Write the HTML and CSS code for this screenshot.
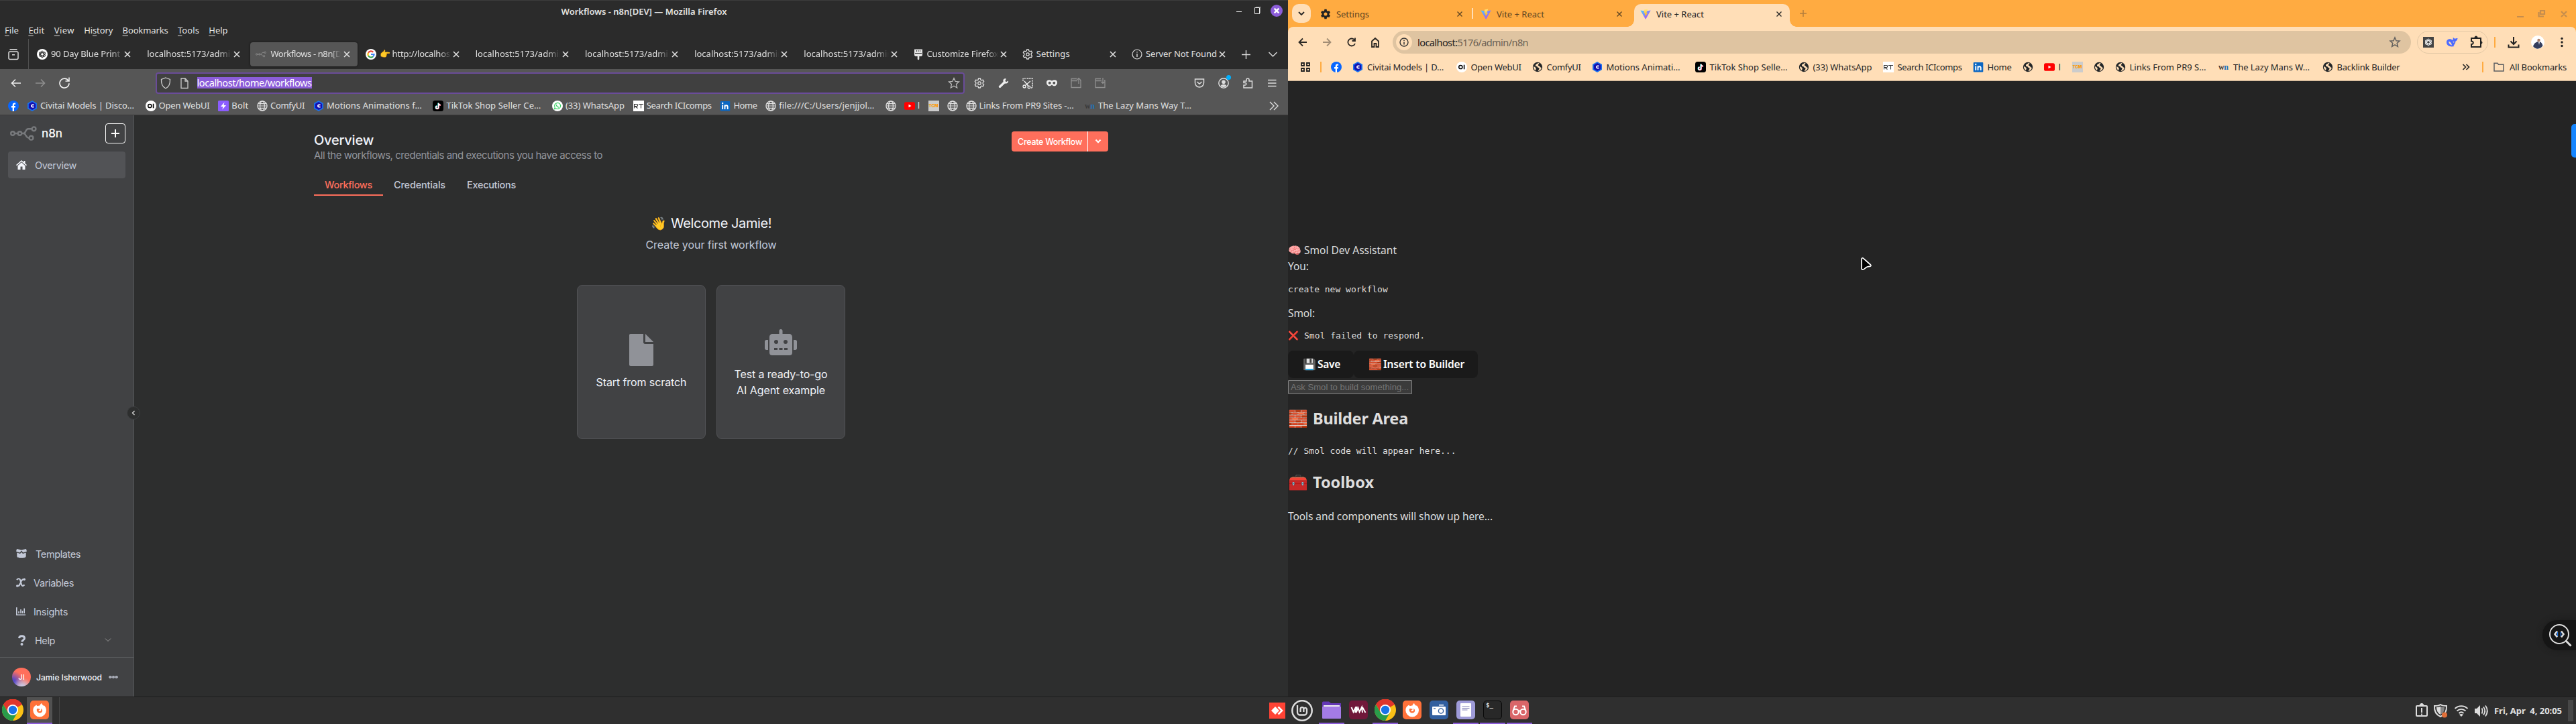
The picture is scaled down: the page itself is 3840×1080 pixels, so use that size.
FILE: index.html
```html
<!DOCTYPE html>
<html lang="en">
<head>
<meta charset="utf-8">
<title>Desktop</title>
<link rel="stylesheet" href="styles.css">
</head>
<body>
<svg class="defs" aria-hidden="true">
  <defs>
    <linearGradient id="vb" x1="0" y1="0" x2="1" y2="1"><stop offset="0" stop-color="#41d1ff"/><stop offset="1" stop-color="#bd34fe"/></linearGradient>
    <linearGradient id="vy" x1="0" y1="0" x2="0" y2="1"><stop offset="0" stop-color="#ffea83"/><stop offset="1" stop-color="#ffa800"/></linearGradient>
  </defs>
  <symbol id="x" viewBox="0 0 16 16"><path d="M4 4l8 8M12 4l-8 8" fill="none" stroke="currentColor" stroke-width="1.6"/></symbol>
  <symbol id="globe" viewBox="0 0 16 16"><g fill="none" stroke="currentColor" stroke-width="1.2"><circle cx="8" cy="8" r="7.1"/><ellipse cx="8" cy="8" rx="3.4" ry="7.1"/><path d="M1 8h14M2 4.6h12M2 11.4h12"/></g></symbol>
  <symbol id="earth" viewBox="0 0 16 16"><circle cx="8" cy="8" r="7.2" fill="#222527"/><path d="M9 1.800C7 4 5.500 3 5 5.500s2.500 1 3 2.500 2.500.5 2.500 2.200S9 12.500 8.500 14.200c3-.4 5-2.700 5.300-5.200-1.300-.2-2.300-1.500-3.300-2.500S8.500 6 9 4.500s1.500-1 1.500-2zM2 7c1.500.6 3.500 1.500 3.700 3s-.7 1.500-.7 3.200C3 12 1.700 9.500 2 7z" fill="#ffdeb7"/></symbol>
  <symbol id="fb" viewBox="0 0 16 16"><circle cx="8" cy="8" r="8" fill="#0866ff"/><path d="M6.700 16v-5.500H5V8h1.700V6.700c0-2.200 1-3.300 3-3.300.5 0 1 .1 1.400.2v2.100h-.9c-1 0-1.200.4-1.200 1.200V8h2l-.4 2.500H9V16z" fill="#fff"/></symbol>
  <symbol id="civ" viewBox="0 0 16 16"><path d="M8 0l7 4v8l-7 4-7-4V4z" fill="#1971ee"/><path d="M8 2l5.200 3v6L8 14l-5.200-3V5z" fill="#1410b0"/><path d="M10.600 6.400H8.200L7 7.200v1.700l1.200.8h2.400" fill="none" stroke="#fff" stroke-width="1.700"/></symbol>
  <symbol id="oi" viewBox="0 0 16 16"><circle cx="8" cy="8" r="8" fill="#fff"/><circle cx="6.300" cy="8" r="2.600" fill="none" stroke="#000" stroke-width="1.500"/><path d="M11.600 4.700v6.600" stroke="#000" stroke-width="1.600"/></symbol>
  <symbol id="bolt" viewBox="0 0 16 16"><rect width="16" height="16" rx="1.500" fill="#8b5cff"/><path d="M9.500 2.500L4 9h3.400l-1 4.500L12 7H8.500z" fill="#fff"/></symbol>
  <symbol id="tik" viewBox="0 0 16 16"><rect width="16" height="16" rx="3.500" fill="#000"/><g fill="none" stroke-width="1.700"><path d="M8.200 3.500v6.600a1.900 1.900 0 1 1-2-1.900M8.200 4c.3 1.700 1.600 2.500 3 2.500" stroke="#25f4ee"/><path d="M9.200 4v6.600a1.900 1.900 0 1 1-2-1.900M9.200 4.500c.3 1.700 1.600 2.500 3 2.500" stroke="#fe2c55"/><path d="M8.700 3.700v6.600a1.900 1.900 0 1 1-2-1.900M8.700 4.200c.3 1.700 1.600 2.500 3 2.500" stroke="#fff"/></g></symbol>
  <symbol id="wa" viewBox="0 0 16 16"><circle cx="8" cy="8" r="8" fill="#fff"/><path d="M3.500 12.600l.7-2.400a4.500 4.500 0 1 1 1.700 1.700z" fill="none" stroke="#3bd366" stroke-width="1.200"/><path d="M6.400 6c0 2 1.700 3.900 3.700 4" fill="none" stroke="#3bd366" stroke-width="1.500"/></symbol>
  <symbol id="rt" viewBox="0 0 16 16"><rect width="16" height="16" fill="#fff"/><path d="M1.500 11.500v-6h4c1.500 0 1.500 3 0 3h-3l4 3M8 5.500h7M11.500 5.500v6" fill="none" stroke="#333" stroke-width="1.100"/></symbol>
  <symbol id="in" viewBox="0 0 16 16"><rect x=".7" y="1" width="14.600" height="14.500" rx="1" fill="#0a66c2"/><path d="M4.200 6.500V13M7.500 13V6.500M7.500 9.500c0-3 4.200-3 4.200 0V13" fill="none" stroke="#fff" stroke-width="1.900"/><circle cx="4.200" cy="4" r="1.200" fill="#fff"/></symbol>
  <symbol id="yt" viewBox="0 0 16 16"><rect y="2.200" width="16" height="11.600" rx="2.600" fill="#f00"/><path d="M6.500 5.700v4.600L10.500 8z" fill="#fff"/></symbol>
  <symbol id="gear" viewBox="0 0 16 16"><path d="M6.600 1h2.800l.5 2 1.400.8 2-.6 1.400 2.400L13.200 7v2l1.500 1.400-1.400 2.400-2-.6-1.400.8-.5 2H6.600l-.5-2-1.400-.8-2 .6-1.400-2.400L2.800 9V7L1.300 5.600l1.400-2.400 2 .6L6.100 3z" fill="none" stroke="currentColor" stroke-width="1.300" stroke-linejoin="round"/><circle cx="8" cy="8" r="2.200" fill="none" stroke="currentColor" stroke-width="1.300"/></symbol>
  <symbol id="gearf" viewBox="0 0 16 16"><path fill-rule="evenodd" d="M6.400.8h3.200l.4 2.100 1.400.8 2-.7L15 5.800l-1.600 1.400v1.600L15 10.200 13.400 13l-2-.7-1.400.8-.4 2.100H6.400L6 13.100l-1.400-.8-2 .7L1 10.200l1.600-1.400V7.200L1 5.800 2.600 3l2 .7L6 2.900zM8 5.500a2.500 2.500 0 1 0 0 5 2.500 2.500 0 0 0 0-5z" fill="currentColor"/></symbol>
  <symbol id="vite" viewBox="0 0 16 16"><path d="M15.600 2.400L8.500 15.200a.5.5 0 0 1-.8 0L.4 2.400l7.700 1.300z" fill="url(#vb)"/><path d="M11.200.4L6 1.400l-.4 5.700 1.700-.4-.5 2.600 1.200-.3-.7 3.600L11.300 6l-2 .4z" fill="url(#vy)"/></symbol>
  <symbol id="gpt" viewBox="0 0 16 16"><g fill="none" stroke="currentColor" stroke-width="1.100"><ellipse cx="8" cy="8" rx="2.600" ry="5.600"/><ellipse cx="8" cy="8" rx="2.600" ry="5.600" transform="rotate(60 8 8)"/><ellipse cx="8" cy="8" rx="2.600" ry="5.600" transform="rotate(120 8 8)"/></g></symbol>
  <symbol id="google" viewBox="0 0 16 16"><circle cx="8" cy="8" r="8" fill="#fff"/><g fill="none" stroke-width="2.200"><path d="M4 5.700A4.600 4.600 0 0 1 11.300 4.800" stroke="#ea4335"/><path d="M4 5.700a4.600 4.600 0 0 0 0 4.600" stroke="#fbbc05"/><path d="M4 10.300a4.600 4.600 0 0 0 7 1.100" stroke="#34a853"/><path d="M8 8h4.600a4.600 4.600 0 0 1-1.600 3.400" stroke="#4285f4"/></g></symbol>
  <symbol id="nodes" viewBox="0 0 40 22"><g fill="none" stroke="currentColor" stroke-width="2.400"><circle cx="4" cy="11" r="2.800"/><circle cx="14.500" cy="11" r="2.800"/><circle cx="35.500" cy="4.300" r="2.900"/><circle cx="31.500" cy="17.700" r="2.900"/><path d="M7 11h4.500M17.500 11H20c4 0 2.500-6.700 7-6.700h5.500M20 11c4 0 3 6.700 8.300 6.700"/></g></symbol>
  <symbol id="chrome" viewBox="0 0 32 32"><circle cx="16" cy="16" r="16" fill="#fbc116"/><path d="M16 16L2.100 8A16 16 0 0 1 29.900 8z" fill="#e0362c"/><path d="M16 8h13.900A16 16 0 0 0 2.100 8L9 20z" fill="#e0362c"/><path d="M2.100 8A16 16 0 0 0 16 32l7-12-7-4-7 4z" fill="#2a9c4a"/><circle cx="16" cy="16" r="8" fill="#fff"/><circle cx="16" cy="16" r="6.200" fill="#1a73e8"/></symbol>
  <symbol id="ff" viewBox="0 0 28 28"><rect width="28" height="28" rx="5" fill="#ff7139"/><path d="M9.500 6.500c.2 1 .8 1.500 1.700 1.600 1.200-.6 2.600-.7 3.300-.5.2-1.600 1.300-3 2.600-3.600.1 2 2 2.700 3 4 .7-.2.500-1 .5-1 2.200 2.200 3.400 4.700 3.400 7.600a9.800 9.800 0 0 1-19.700 0c0-3.400 1.600-6.700 5.200-8.100z" fill="#fff"/><path d="M10 12.500c1.300-.9 2.600-.5 3.400 0 1.800-.2 1.700.8.300 1.300-1 .4-.6 1.500-1.500 1.600 2.300 1.600 5.300-.1 3.800-3.500 3 .7 3.200 6-1.500 6.600-3 .3-5.600-2.800-4.500-6z" fill="#ff7139"/></symbol>
</svg>

<main class="desk">
  <section class="ffx ub">
    <header class="titlebar"><span class="wtitle" data-w="247">Workflows - n8n[DEV] — Mozilla Firefox</span>
      <div class="wbtns"><svg width="76" height="22" viewBox="0 0 76 22"><path d="M8 12.500h8" stroke="#eee"/><path d="M35.500 6.500h7v9h-7z" fill="none" stroke="#eee"/><path d="M37 5.500h7.500v9" fill="none" stroke="#888"/><circle cx="68" cy="11" r="9" fill="#8c5dd9"/><path d="M64.700 7.700l6.600 6.600M71.300 7.700l-6.600 6.600" stroke="#fff" stroke-width="2.500"/></svg></div>
    </header>
    <nav class="menubar"><span data-w="21"><u>F</u>ile</span><span data-w="24"><u>E</u>dit</span><span data-w="30"><u>V</u>iew</span><span data-w="43">Hi<u>s</u>tory</span><span data-w="68"><u>B</u>ookmarks</span><span data-w="32"><u>T</u>ools</span><span data-w="28"><u>H</u>elp</span></nav>
    <div class="tabs">
      <div class="view"><svg width="18" height="18" viewBox="0 0 18 18"><g fill="none" stroke="#ddd" stroke-width="1.500"><rect x="2" y="5" width="14" height="11.500" rx="2"/><path d="M3.500 1.700h11M7 9.700h4"/></g></svg></div>
      <div class="tab"><span class="disc"><svg class="i14"><use href="#gpt"/></svg></span><span class="t"><b data-w="103">90 Day Blue Print</b></span><svg class="i16"><use href="#x"/></svg></div>
      <div class="tab"><span class="t"><b data-w="132">localhost:5173/admin</b></span><svg class="i16"><use href="#x"/></svg></div>
      <div class="tab on"><svg class="i16 dim"><use href="#nodes"/></svg><span class="t"><b data-w="120">Workflows - n8n[DEV</b></span><svg class="i16"><use href="#x"/></svg></div>
      <div class="tab"><svg class="i16"><use href="#google"/></svg><span class="t"><b data-w="110">👉 http://localhost</b></span><svg class="i16"><use href="#x"/></svg></div>
      <div class="tab"><span class="t"><b data-w="132">localhost:5173/admin</b></span><svg class="i16"><use href="#x"/></svg></div>
      <div class="tab"><span class="t"><b data-w="132">localhost:5173/admin</b></span><svg class="i16"><use href="#x"/></svg></div>
      <div class="tab"><span class="t"><b data-w="132">localhost:5173/admin</b></span><svg class="i16"><use href="#x"/></svg></div>
      <div class="tab"><span class="t"><b data-w="132">localhost:5173/admin</b></span><svg class="i16"><use href="#x"/></svg></div>
      <div class="tab"><svg class="i16" viewBox="0 0 16 16"><path d="M2 .5h12v9l-1.500 1.500H9.300V15a1.300 1.300 0 0 1-2.600 0v-4H3.500L2 9.500z" fill="#e4e4e4"/><path d="M5.500 2v2M8 2v2M10.500 2v2M3 6.500h10" stroke="#333"/></svg><span class="t"><b data-w="107">Customize Firefox</b></span><svg class="i16"><use href="#x"/></svg></div>
      <div class="tab"><svg class="i16"><use href="#gear"/></svg><span class="t"><b data-w="50">Settings</b></span><svg class="i16"><use href="#x"/></svg></div>
      <div class="tab"><svg class="i16" viewBox="0 0 16 16"><circle cx="8" cy="8" r="7" fill="none" stroke="#ddd" stroke-width="1.200"/><path d="M8 7v5M8 4v1.500" stroke="#ddd" stroke-width="1.400"/></svg><span class="t"><b data-w="106">Server Not Found</b></span><svg class="i16"><use href="#x"/></svg></div>
      <svg class="tabend" width="70" height="20" viewBox="0 0 70 20"><path d="M17.500 4v13M11 10.500h13M51.500 7l6 6 6-6" fill="none" stroke="#ddd" stroke-width="1.400"/></svg>
    </div>
    <div class="navbar">
      <svg class="navl" width="120" height="24" viewBox="0 0 120 24"><g fill="none" stroke="#eee" stroke-width="1.600"><path d="M31 12H17.500M23 6.500L17.500 12l5.500 5.500"/><path d="M53 12h13.500M61 6.500l5.500 5.500-5.500 5.500" stroke="#8e8e8e"/><path d="M102 8.500a7 7 0 1 0 1 3.700M97.500 9H103V3.500"/></g></svg>
      <div class="url">
        <svg width="46" height="20" viewBox="0 0 46 20"><g fill="none" stroke="#ccc" stroke-width="1.300"><path d="M9 2l6.500 2.500c.3 6-1.500 11-6.500 13.500C4 15.500 2.200 10.500 2.500 4.500z"/><path d="M32 3h6l4 4v10.500H32zM38 3v4h4"/></g></svg>
        <mark data-w="171">localhost/home/workflows</mark>
        <svg class="star" width="18" height="18" viewBox="0 0 18 18"><path d="M9 1.500l2.200 5 5.300.5-4 3.600 1.200 5.400L9 13.200 4.300 16l1.200-5.400-4-3.600 5.300-.5z" fill="none" stroke="#bbb" stroke-width="1.300"/></svg>
      </div>
      <div class="tools"><svg class="i16"><use href="#gear"/></svg>
        <svg class="i16" viewBox="0 0 16 16"><path d="M15 4.500l-3 1.800-1.700-1.600L12 1.500C8.500.5 6.700 3 7.600 6L1 12.500c-1 1.500 1 3.300 2.500 2.300L10 8.500c3.300.7 5.500-1.500 5-4z" fill="#eee"/></svg>
        <svg class="i16" viewBox="0 0 16 16"><path d="M1 5V1h14v14h-3" fill="none" stroke="#eee" stroke-width="1.500" stroke-dasharray="1.500 1"/><g fill="none" stroke="#eee" stroke-width="1.400"><circle cx="3" cy="13" r="2"/><circle cx="10" cy="14" r="1.800"/><path d="M4.500 11.500L12 5M9 12.500L3 5"/></g></svg>
        <svg class="i16" viewBox="0 0 16 16"><path fill-rule="evenodd" d="M0 7c0-4 4-4.500 8-2.500 4-2 8-1.500 8 2.500 0 5-5 7-8 3.500C5 14 0 12 0 7zm4.700-1.200a2 2 0 1 0 .01 4 2 2 0 0 0 0-4zm6.600 0a2 2 0 1 0 .01 4 2 2 0 0 0 0-4z" fill="#eee"/></svg>
        <svg class="i16 mute" viewBox="0 0 16 16"><path d="M9 1.500H1v13h14V4h-1M1 4.500h9M12 9V.8M9.500 3L12 .7 14.500 3" fill="none" stroke="currentColor" stroke-width="1.300"/></svg>
        <svg class="i16 mute" viewBox="0 0 16 16"><path d="M9 1.500H1v13h14V4h-1M1 4.500h9M12 0v8M9.500 6L12 8.300 14.500 6" fill="none" stroke="currentColor" stroke-width="1.300"/></svg></div>
      <div class="tools end">
        <svg class="i16" viewBox="0 0 16 16"><path d="M1.500 2h13v5.500a6.500 6.500 0 0 1-13 0zM4.500 6L8 9.300 11.500 6" fill="none" stroke="#ddd" stroke-width="1.500"/></svg>
        <span class="acct"><svg class="i16" viewBox="0 0 16 16"><circle cx="8" cy="8" r="7.200" fill="none" stroke="#ddd" stroke-width="1.400"/><circle cx="8" cy="6.200" r="2.800" fill="#ddd"/><path d="M3.500 12c2-3 7-3 9 0-2 2.500-7 2.500-9 0z" fill="#ddd"/></svg><i></i></span>
        <svg class="i16" viewBox="0 0 16 16"><path d="M2 15V11h2a1.600 1.600 0 1 0 0-3.500H2V5h4V3a2 2 0 0 1 4 0v2h4.500v10z" fill="none" stroke="#ddd" stroke-width="1.500"/></svg>
        <svg class="i16" viewBox="0 0 16 16"><path d="M2 3.500h12.500M2 8h12.500M2 12.500h12.500" stroke="#ddd" stroke-width="1.400"/></svg></div>
    </div>
    <div class="marks">
      <a><svg class="i16"><use href="#fb"/></svg></a>
      <a class="cut"><svg class="i16"><use href="#civ"/></svg><b data-w="140">Civitai Models | Disco…</b></a>
      <a><svg class="i16"><use href="#oi"/></svg><b data-w="76">Open WebUI</b></a>
      <a><svg class="i16"><use href="#bolt"/></svg><b data-w="25">Bolt</b></a>
      <a><svg class="i16"><use href="#globe"/></svg><b data-w="51">ComfyUI</b></a>
      <a class="cut"><svg class="i16"><use href="#civ"/></svg><b data-w="142">Motions Animations f…</b></a>
      <a class="cut"><svg class="i16"><use href="#tik"/></svg><b data-w="141">TikTok Shop Seller Ce…</b></a>
      <a><svg class="i16"><use href="#wa"/></svg><b data-w="88">(33) WhatsApp</b></a>
      <a><svg class="i16"><use href="#rt"/></svg><b data-w="97">Search ICIcomps</b></a>
      <a><svg class="i16"><use href="#in"/></svg><b data-w="35">Home</b></a>
      <a class="cut"><svg class="i16"><use href="#globe"/></svg><b data-w="142">file:///C:/Users/jenjjol…</b></a>
      <a><svg class="i16"><use href="#globe"/></svg></a>
      <a><svg class="i16"><use href="#yt"/></svg><b data-w="3">l</b></a>
      <a><span class="tcm">TCM</span></a>
      <a><svg class="i16"><use href="#globe"/></svg></a>
      <a class="cut"><svg class="i16"><use href="#globe"/></svg><b data-w="141">Links From PR9 Sites -…</b></a>
      <a><span class="wn">w<i>n</i></span><b data-w="139">The Lazy Mans Way T…</b></a>
      <svg class="more" width="16" height="16" viewBox="0 0 16 16"><path d="M2 2l6 6-6 6M8 2l6 6-6 6" fill="none" stroke="#ddd" stroke-width="1.400"/></svg>
    </div>

    <div class="n8n">
      <aside class="side">
        <div class="brand"><svg class="logo" width="40" height="22"><use href="#nodes"/></svg><b data-w="31">n8n</b><span class="plus"><svg width="14" height="14" viewBox="0 0 14 14"><path d="M7 1v12M1 7h12" stroke="#fff" stroke-width="2"/></svg></span></div>
        <div class="item sel"><svg width="16" height="16" viewBox="0 0 16 16"><path d="M8 1L0 8l1 1.200L8 3l7 6.200L16 8l-2.500-2.200V2h-2v2zM8 4.300L2.500 9.200V15h4v-4.500h3V15h4V9.200z" fill="#f2f4fa"/></svg><span data-w="62">Overview</span></div>
        <div class="grow"></div>
        <div class="item"><svg width="16" height="14" viewBox="0 0 16 14"><path d="M1 0l7 1.300L15 0l1 3.500-5.500 1.800L8 2.600 5.500 5.300 0 3.500zM1.300 5.500L6 7l2-2.300L10 7l4.700-1.500v5C14.700 13 12 13 8 13s-6.700 0-6.700-2.500z" fill="#c3c9d8"/></svg><span class="m5" data-w="67">Templates</span></div>
        <div class="item"><svg width="14" height="14" viewBox="0 0 14 14"><path d="M1 3C3 .5 5.500.5 6.500 4l1.300 5.500c.7 3 2.700 3 4.700.7M12.500 2.500C9 1 7.500 5 6.500 7.500 5 11 4 13 1.500 11.500" fill="none" stroke="#c3c9d8" stroke-width="2.200"/><circle cx="12.300" cy="2.300" r="1.700" fill="#c3c9d8"/><circle cx="1.700" cy="12" r="1.700" fill="#c3c9d8"/></svg><span data-w="60">Variables</span></div>
        <div class="item"><svg width="14" height="12" viewBox="0 0 14 12"><path d="M.8 0v11.200H14M4 9V6M7 9V3M9.500 9V5M12.200 9V1.500" fill="none" stroke="#c3c9d8" stroke-width="1.600"/></svg><span data-w="51">Insights</span></div>
        <div class="item"><svg width="16" height="16" viewBox="0 0 16 16"><path d="M4.500 5c.5-4.500 8-4 8 0 0 3-3.600 2.500-3.600 5.500" fill="none" stroke="#c3c9d8" stroke-width="3"/><circle cx="8.500" cy="14" r="2" fill="#c3c9d8"/></svg><span data-w="30">Help</span><svg class="chev" width="10" height="6" viewBox="0 0 10 6"><path d="M1 .5l4 4 4-4" fill="none" stroke="#999"/></svg></div>
        <div class="user"><span class="av">JI</span><span data-w="98">Jamie Isherwood</span><i class="dots"></i></div>
        <svg class="fold" width="20" height="20" viewBox="0 0 20 20"><circle cx="10" cy="10" r="9.500" fill="#2d2e2e" stroke="#3d3f41"/><path d="M11.500 7l-3 3 3 3" fill="none" stroke="#ddd" stroke-width="1.300"/></svg>
      </aside>
      <div class="content">
        <div class="head"><div><h1><b data-w="89">Overview</b></h1><p><b data-w="430">All the workflows, credentials and executions you have access to</b></p></div>
          <div class="cta"><span data-w="96">Create Workflow</span><em><svg width="10" height="8" viewBox="0 0 10 8"><path d="M1.500 1.500L5 5.200l3.500-3.700" fill="none" stroke="#fff" stroke-width="2.200"/></svg></em></div></div>
        <div class="ntabs"><span class="act"><b data-w="71">Workflows</b></span><span><b data-w="77">Credentials</b></span><span><b data-w="73">Executions</b></span></div>
        <h2><span>👋</span><b data-w="150">Welcome Jamie!</b></h2>
        <p class="first"><b data-w="195">Create your first workflow</b></p>
        <div class="cards">
          <div class="card"><svg width="36" height="48" viewBox="0 0 36 48"><path d="M2 0h19v12.500c0 1.500 1 2.500 2.500 2.500H36v31a2 2 0 0 1-2 2H2a2 2 0 0 1-2-2V2a2 2 0 0 1 2-2zM24 0l12 12H24z" fill="#909298"/></svg><span data-w="135">Start from scratch</span></div>
          <div class="card"><svg width="48" height="40" viewBox="0 0 48 40"><path fill-rule="evenodd" d="M24 0c1.500 0 2.500 1 2.500 2.500V7H36c3 0 5 2 5 5v23c0 3-2 4-4 4H11c-2 0-4-1-4-4V12c0-3 2-5 5-5h9.500V2.500C21.500 1 22.500 0 24 0zM17 16a3 3 0 1 0 0 6 3 3 0 0 0 0-6zm14 0a3 3 0 1 0 0 6 3 3 0 0 0 0-6zM14 28v3h5v-3zm7.500 0v3h5v-3zm7.500 0v3h5v-3zM2.500 16H5v15H2.500C1 31 0 30 0 28.500v-10C0 17 1 16 2.500 16zM43 16h2.500c1.500 0 2.500 1 2.500 2.500v10c0 1.500-1 2.500-2.500 2.500H43z" fill="#909298"/></svg><span data-w="139">Test a ready-to-go</span><span data-w="132">AI Agent example</span></div>
        </div>
      </div>
    </div>
  </section>

  <section class="chr ub">
    <header class="strip">
      <span class="drop"><svg width="10" height="8" viewBox="0 0 10 8"><path d="M1 2l4 4 4-4" fill="none" stroke="#222" stroke-width="1.800"/></svg></span>
      <div class="ctab"><svg class="i16"><use href="#gearf"/></svg><b data-w="49">Settings</b><svg class="i14"><use href="#x"/></svg></div>
      <div class="ctab line"><svg class="i16"><use href="#vite"/></svg><b data-w="71">Vite + React</b><svg class="i14"><use href="#x"/></svg></div>
      <div class="ctab cur"><svg class="i16"><use href="#vite"/></svg><b data-w="71">Vite + React</b><svg class="i14"><use href="#x"/></svg></div>
      <svg class="cplus" width="12" height="12" viewBox="0 0 12 12"><path d="M6 1v10M1 6h10" stroke="#b27d3c" stroke-width="1.500"/></svg>
      <svg class="cwin" width="80" height="14" viewBox="0 0 80 14"><g fill="none" stroke="#c58d4d" stroke-width="2.200"><path d="M1 11h10M36 2h6v5h-6zM33.500 4v6.500H41M67 3l8 8M75 3l-8 8"/></g></svg>
    </header>
    <div class="cbar">
      <div class="crow">
        <svg class="cnav" width="140" height="20" viewBox="0 0 140 20"><g fill="none" stroke="#2b2723" stroke-width="1.800"><path d="M20 10H9M14 4.500L8.500 10l5.500 5.500"/><path d="M44 10h11M50 4.500l5.500 5.500-5.500 5.500" stroke="#a28d75"/><path d="M91.500 7a5.500 5.500 0 1 0 .5 5M92 3.500V8h-4.500"/><path d="M117 17V8.500L122 4l5 4.500V17h-3.500v-5h-3v5z"/></g></svg>
        <div class="omni"><span class="info"><svg class="i14" viewBox="0 0 14 14"><circle cx="7" cy="7" r="6" fill="none" stroke="#333" stroke-width="1.400"/><path d="M7 6.500V10.500M7 3.500V5" stroke="#333" stroke-width="1.500"/></svg></span><span data-w="165"><b>localhost:</b>5176/admin/n8n</span><svg class="star" width="18" height="18" viewBox="0 0 18 18"><path d="M9 2l2 4.800 5 .4-3.800 3.300 1.200 5L9 12.900l-4.400 2.600 1.200-5L2 7.200l5-.4z" fill="none" stroke="#62605e" stroke-width="1.500"/></svg></div>
        <div class="ext"><span class="gp"><svg class="i14"><use href="#gpt"/></svg></span>
          <svg width="18" height="16" viewBox="0 0 18 16"><path d="M1 8c0-5 6-6 9-3 1-1 1-3 .5-4 1.500.5 2.500 1.500 3 2 1-1 3-1 4-1-.2 2.500-1.500 4-3 4.500-.2 3-1.500 5-3 6l1 1.500C6 15.500 1 13 1 8zm3-1c.5 3 2.500 5 5 5.500C8.500 9 6.500 7 4 7zm6 0l2 2 .5-2z" fill="#4d6bfe" fill-rule="evenodd"/></svg>
          <svg width="18" height="18" viewBox="0 0 18 18"><path d="M2 3h14v13H2v-4a2.300 2.300 0 1 0 0-4.500z" fill="none" stroke="#222" stroke-width="2"/><path d="M7 2a2 2 0 0 1 4 0zM16 7.500a2 2 0 0 1 0 4z" fill="#222" stroke="#222"/></svg></div>
        <i class="vl a"></i>
        <svg class="dl" width="18" height="18" viewBox="0 0 18 18"><path d="M9 1v11M4.500 7.500L9 12l4.500-4.500M1.500 12.500v4h15v-4" fill="none" stroke="#222" stroke-width="2"/></svg>
        <svg class="me" width="20" height="20" viewBox="0 0 20 20"><circle cx="10" cy="10" r="10" fill="#fff"/><circle cx="11.500" cy="7" r="2.200" fill="#ad7d66"/><path d="M3 16c2-5 5-7 8.500-7s5 3 6 6c-3 5-10 7-14.500 1z" fill="#343d5c"/><path d="M11 9l1 5 1-5z" fill="#fff"/></svg>
        <svg class="kb" width="6" height="16" viewBox="0 0 6 16"><g fill="#222"><circle cx="3" cy="2.500" r="1.700"/><circle cx="3" cy="8" r="1.700"/><circle cx="3" cy="13.500" r="1.700"/></g></svg>
      </div>
      <div class="cmarks">
        <svg class="i16 apps" viewBox="0 0 16 16"><path d="M2 2h4v4H2zM10 2h4v4h-4zM2 10h4v4H2zM10 10h4v4h-4z" fill="none" stroke="#222" stroke-width="1.800"/></svg><i class="vl"></i>
        <a><svg class="i16"><use href="#fb"/></svg></a>
        <a class="cut"><svg class="i16"><use href="#civ"/></svg><b data-w="114">Civitai Models | D…</b></a>
        <a><svg class="i16"><use href="#oi"/></svg><b data-w="75">Open WebUI</b></a>
        <a><svg class="i16"><use href="#earth"/></svg><b data-w="51">ComfyUI</b></a>
        <a class="cut w"><svg class="i16"><use href="#civ"/></svg><b data-w="110">Motions Animati…</b></a>
        <a><svg class="i16"><use href="#tik"/></svg><b data-w="116">TikTok Shop Selle…</b></a>
        <a><svg class="i16"><use href="#earth"/></svg><b data-w="88">(33) WhatsApp</b></a>
        <a><svg class="i16"><use href="#rt"/></svg><b data-w="96">Search ICIcomps</b></a>
        <a><svg class="i16"><use href="#in"/></svg><b data-w="36">Home</b></a>
        <a><svg class="i16"><use href="#earth"/></svg></a>
        <a><svg class="i16"><use href="#yt"/></svg><b data-w="4">l</b></a>
        <a><span class="tcm">TCM</span></a>
        <a><svg class="i16"><use href="#earth"/></svg></a>
        <a class="cut"><svg class="i16"><use href="#earth"/></svg><b data-w="114">Links From PR9 S…</b></a>
        <a class="cut"><span class="wn">w<i>n</i></span><b data-w="114">The Lazy Mans W…</b></a>
        <a><svg class="i16"><use href="#earth"/></svg><b data-w="94">Backlink Builder</b></a>
        <svg class="cmore" width="12" height="10" viewBox="0 0 12 10"><path d="M1.500 1l4 4-4 4M6.500 1l4 4-4 4" fill="none" stroke="#222" stroke-width="1.600"/></svg><i class="vl b"></i>
        <svg class="fol" width="16" height="14" viewBox="0 0 16 14"><path d="M1 1.200h5l1.500 2H15V13H1z" fill="none" stroke="#5f6063" stroke-width="1.500"/></svg><b data-w="85">All Bookmarks</b>
      </div>
    </div>
    <article class="page">
      <p class="ln"><span class="em">🧠</span><b data-w="138">Smol Dev Assistant</b></p>
      <p class="ln"><b data-w="31">You:</b></p>
      <pre>create new workflow</pre>
      <p class="ln"><b data-w="40">Smol:</b></p>
      <pre class="reply"><span class="em">❌</span>Smol failed to respond.</pre>
      <div class="btns"><button><span class="em">💾</span><b data-w="34">Save</b></button><button><span class="em">🧱</span><b data-w="121">Insert to Builder</b></button></div>
      <div class="ask">Ask Smol to build something...</div>
      <h3><span class="em">🧱</span><b data-w="142">Builder Area</b></h3>
      <pre>// Smol code will appear here...</pre>
      <h3><span class="em">🧰</span><b data-w="91">Toolbox</b></h3>
      <p class="ln"><b data-w="305">Tools and components will show up here...</b></p>
      <i class="blue"></i>
      <svg class="cursor" width="18" height="22" viewBox="0 0 18 22"><path d="M2 3.500C2 2 3.500 1.300 4.600 2.300L15.500 12c1 1 .5 2.300-1 2.300-4 0-5.500.7-8.300 3.700C4.500 19.800 2 19.500 2 17.200z" fill="#000" stroke="#fff" stroke-width="1.700" stroke-linejoin="round"/></svg>
      <div class="lens"><svg width="36" height="36" viewBox="0 0 36 36"><circle cx="16" cy="16" r="14" fill="none" stroke="#ddd" stroke-width="2"/><path d="M25.500 25.500l8 8" stroke="#ddd" stroke-width="3"/><path d="M13 11.500L9.500 16l3.500 4.500M19 11.500l3.500 4.500-3.500 4.500" fill="none" stroke="#ddd" stroke-width="2.600"/><path d="M13.500 13v6M18.500 13v6" stroke="#1a73e8" stroke-width="1.300"/></svg></div>
    </article>
  </section>
</main>

<footer class="panel">
  <span class="app"><svg width="32" height="32"><use href="#chrome"/></svg></span>
  <span class="app lit run"><svg width="28" height="28"><use href="#ff"/></svg></span><i class="psep"></i>
  <div class="dock">
    <span class="any"><svg width="24" height="24" viewBox="0 0 24 24"><rect width="24" height="24" fill="#ff4335"/><path d="M3 12l6-6 6 6-6 6z" fill="#fff"/><path d="M13.500 6.500L19 12l-5.500 5.500" fill="none" stroke="#fff" stroke-width="2.600"/></svg></span>
    <span class="mint"><svg width="32" height="32" viewBox="0 0 32 32"><circle cx="16" cy="16" r="14.700" fill="none" stroke="#ddd" stroke-width="2.500"/><path d="M9 8v10.500a4 4 0 0 0 4 4h6a4 4 0 0 0 4-4v-5a2.400 2.400 0 0 0-4.600 0V18M18.400 13.500a2.400 2.400 0 0 0-4.800 0V18" fill="none" stroke="#ddd" stroke-width="2.300"/></svg></span>
    <span class="app run"><svg width="28" height="28" viewBox="0 0 28 28"><path d="M0 3a1.500 1.500 0 0 1 1.500-1.500H10L13 4h15v8H0z" fill="#6437b5"/><path d="M2 7h24v4H2z" fill="#eee"/><rect y="9" width="28" height="18" rx="1" fill="#a47be5"/></svg></span>
    <span class="app"><svg width="28" height="28" viewBox="0 0 28 28"><rect width="28" height="28" rx="5" fill="#70183a"/><path d="M3.500 10l3 7 3.500-7h1.500l-2.500 8M10.500 18l3-7 2 6 3.500-7 1 8M20 10l4.500 8" fill="none" stroke="#fff" stroke-width="2"/></svg></span>
    <span class="app run"><svg width="32" height="32"><use href="#chrome"/></svg></span>
    <span class="app"><svg width="28" height="28"><use href="#ff"/></svg></span>
    <span class="app"><svg width="28" height="28" viewBox="0 0 28 28"><rect width="28" height="28" rx="5" fill="#315f9f"/><rect x="4" y="9" width="20" height="13" rx="1" fill="#fff"/><path d="M14 6.800h7" stroke="#fff" stroke-width="1.500"/><path d="M6 12h3" stroke="#315f9f" stroke-width="1.300"/><circle cx="17" cy="15.500" r="3.600" fill="none" stroke="#315f9f" stroke-width="1.400"/></svg></span>
    <span class="app run"><svg width="28" height="28" viewBox="0 0 28 28"><rect width="28" height="28" rx="5" fill="#9e9bd8"/><rect x="6" y="4" width="16" height="20" rx="1" fill="#fff"/><path d="M8.500 9h11M8.500 11.500h11M8.500 14h8" stroke="#8483b8" stroke-width="1.200"/></svg></span>
    <span class="app run"><span class="term">$_</span></span>
    <span class="app run"><svg width="28" height="28" viewBox="0 0 28 28"><rect width="28" height="28" rx="5" fill="#d96669"/><g fill="none" stroke="#fff" stroke-width="2"><circle cx="8.500" cy="17" r="4.200"/><circle cx="19.500" cy="17" r="4.200"/><path d="M12.500 16c1-1 2-1 3 0M4.500 15.500L7 8.500h3M23.500 15.500L21 8.500h-3"/></g></svg></span>
  </div>
  <svg class="tray" width="112" height="24" viewBox="0 0 112 24"><g fill="none" stroke="#ddd" stroke-width="2"><rect x="2" y="5" width="16" height="15" rx="1"/><path d="M10 8v7M10 16.500v2"/><path d="M7 4.500c0-4 6-4 6 0z" fill="#ddd" stroke-width="1"/><path d="M38 3c3 2 6 2 9 2 .5 8-2 13-9 16-7-3-9.500-8-9-16 3 0 6 0 9-2z"/></g><path d="M38 6v12c4-2 6-6 6-11-3 0-4-.5-6-1z" fill="#ddd" opacity=".5"/><path d="M38 6v12c-4-2-6-6-6-11 3 0 4-.5 6-1z" fill="#ddd"/><circle cx="44" cy="18.500" r="4" fill="#e0703a"/><g fill="none" stroke="#ddd" stroke-width="2"><path d="M59.500 9c5.500-5 13.500-5 19 0M62.500 12.500c4-3.500 9-3.500 13 0M65.500 16c2.200-2 4.800-2 7 0"/></g><path d="M66 18c2-1.500 4-1.500 6 0l-3 3z" fill="#ddd"/><path d="M89 9h3l5-5v17l-5-5h-3z" fill="#ddd"/><path d="M99.500 8.500c1.500 2.500 1.500 5 0 8M102 6.500c3 4 3 8 0 12M105 4.500c3.500 5 3.500 11 0 16" fill="none" stroke="#ddd" stroke-width="1.800"/></svg>
  <span class="clock ub"><b data-w="101">Fri, Apr&nbsp; 4, 20:05</b></span><i class="show"></i>
</footer>
<script src="app.js"></script>
</body>
</html>
```
FILE: styles.css
```css
* { box-sizing: border-box; }
body { margin: 0; width: 3840px; height: 1080px; overflow: hidden; background: #242424; font-family: Inter, sans-serif; display: flex; flex-direction: column; }
b, em, i, h1, h2, h3, p, pre { margin: 0; font-weight: inherit; font-style: normal; }
svg { display: block; flex: none; overflow: visible; }
.defs { position: absolute; width: 0; height: 0; }
[data-w] { display: inline-block; white-space: pre; flex: none; }
.ub { font-family: "Noto Sans", sans-serif; }
.i16 { width: 16px; height: 16px; }
.i14 { width: 14px; height: 14px; }
.desk { display: flex; height: 1039px; }
.ffx, .chr { width: 1920px; display: flex; flex-direction: column; }

/* Firefox chrome */
.ffx { background: #2b2b2b; color: #e2e2e2; font-size: 13px; }
.titlebar { height: 33px; border-top: 1px solid #3c3c3c; display: flex; align-items: center; justify-content: center; position: relative; font-weight: 600; }
.wbtns { position: absolute; right: 9px; top: 4px; }
.menubar { height: 25px; padding: 0 0 2px 7px; display: flex; align-items: center; gap: 14.400px; }
.menubar u { text-underline-offset: 3px; }
.tabs { height: 45px; display: flex; align-items: center; font-size: 13px; }
.view { width: 43px; height: 45px; border-right: 1px solid #505050; display: flex; align-items: center; padding-left: 11px; margin-right: 2px; }
.tab { width: 159.200px; height: 36px; margin: 0 2px; padding: 0 8px; display: flex; align-items: center; gap: 5px; border-radius: 4px; }
.tab.on { background: #565656; box-shadow: 0 0 3px #111; gap: 6px; }
.tab .t { flex: 1; min-width: 0; overflow: hidden; margin-right: -5px; padding-bottom: 1px; -webkit-mask-image: linear-gradient(90deg, #000 85%, transparent); mask-image: linear-gradient(90deg, #000 85%, transparent); }
.tab .t:first-child { margin-left: 1px; }
.tab:nth-last-child(-n+3) .t { -webkit-mask-image: none; mask-image: none; }
.dim { color: #8e8e8e; }
.disc { width: 16px; height: 16px; border-radius: 50%; background: #fff; color: #222; padding: 1px; }
.navbar { height: 41px; background: #565656; display: flex; align-items: center; }
.navl { margin-right: 111.500px; }
.url { width: 1206px; height: 32px; border: 2px solid #6a4c99; border-radius: 4px; background: #404040; display: flex; align-items: center; padding-left: 4px; font-size: 14.500px; }
.url mark { background: #8c5dd9; color: #fff; margin-left: 10px; line-height: 17px; }
.star { margin-left: auto; margin-right: 5px; }
.tools { display: flex; gap: 20px; margin-left: 14.500px; }
.tools.end { margin-left: auto; margin-right: 16px; }
.mute { color: #909090; }
.acct { position: relative; }
.acct i { position: absolute; right: -3px; top: -4px; width: 7px; height: 7px; border-radius: 50%; background: #00b0ff; }
.marks { height: 28px; background: #565656; border-bottom: 1px solid #3a3a3a; display: flex; align-items: center; gap: 12px; padding-left: 12px; }
.marks a, .cmarks a { display: flex; align-items: center; gap: 4px; }
.marks b { padding-bottom: 2px; }
.marks a.cut { padding-right: 4.500px; }
.marks a:not(.cut) b { margin-right: .8px; }
.more { margin-left: auto; margin-right: 13px; }
.tcm { width: 16px; height: 16px; background: #ccc; color: #f90; font: 800 6px/16px Inter, sans-serif; text-align: center; }
.wn { width: 16px; font: bold 12px/16px "Liberation Serif", serif; color: #3a3a3a; letter-spacing: -.5px; white-space: nowrap; }
.wn i { color: #2474bb; }

/* n8n */
.n8n { flex: 1; display: flex; background: #2d2e2e; font-family: Inter, sans-serif; }
.side { width: 200px; background: #414244; border-right: 1px solid #55575a; padding-top: 12px; display: flex; flex-direction: column; position: relative; color: #c3c9d8; font-size: 14.500px; }
.brand { display: flex; align-items: center; padding: 0 12px 0 15px; height: 30px; margin-bottom: 12px; color: #fff; font-weight: 500; font-size: 17px; }
.logo { color: #77797c; margin-right: 7px; }
.plus { margin-left: auto; width: 30px; height: 30px; border: 1px solid #fff; border-radius: 4px; display: grid; place-items: center; }
.item { height: 40px; margin: 0 12px 3px; padding-left: 12px; display: flex; align-items: center; gap: 12px; border-radius: 4px; }
.item.sel { background: #525356; }
.m5 { margin-left: 1px; }
.chev { margin-left: 62px; }
.grow { flex: 1; }
.user { height: 59px; margin-top: 2px; border-top: 1px solid #5c5e61; padding: 0 0 0 18px; display: flex; align-items: center; gap: 8px; color: #f2f4fa; font-size: 12px; font-weight: 500; }
.av { width: 28px; height: 28px; border-radius: 50%; background: radial-gradient(circle at 55% 105%, #c9c6e0 10%, transparent 45%), radial-gradient(circle at 0 80%, #5a4ac6 15%, transparent 50%), #ff6f5c; display: grid; place-items: center; color: #fff; font-size: 11px; }
.dots { width: 14px; height: 4px; margin-left: 2px; background: radial-gradient(circle, #a5a9b4 1.900px, transparent 2.200px) 0 0 / 4.670px 4px; }
.fold { position: absolute; left: 189px; top: 434px; }
.content { width: 1720px; padding: 24px 268px 0; display: flex; flex-direction: column; color: #f2f4fa; }
.head { display: flex; justify-content: space-between; }
.head h1 { font-size: 20px; font-weight: 500; line-height: 26px; height: 26px; }
.head p { font-size: 15px; line-height: 19px; height: 19px; color: #92949b; }
.cta { height: 30px; width: 144px; background: #ff6f5c; border-radius: 4px; display: flex; align-items: center; padding-left: 9px; font-size: 12.500px; font-weight: 500; color: #fff; }
.cta em { margin-left: 8px; border-left: 1px solid #fff; height: 30px; flex: 1; display: grid; place-items: center; }
.ntabs { display: flex; margin-top: 18px; font-size: 14.500px; font-weight: 500; color: #c3c9d8; }
.ntabs span { height: 33px; padding: 8px 16px 0; line-height: 18px; }
.ntabs .act { color: #ff6f5c; border-bottom: 2px solid #ff6f5c; }
.ntabs b { line-height: 18px; }
.content h2 { margin-top: 27px; height: 28px; display: flex; justify-content: center; align-items: center; gap: 6px; font-size: 20px; font-weight: 400; }
.content h2 span { width: 24px; font-size: 19px; white-space: nowrap; }
.first { text-align: center; margin-top: 9px; height: 20px; line-height: 18px; font-size: 16px; color: #c3c9d8; }
.cards { margin-top: 49px; display: flex; gap: 16px; justify-content: center; }
.card { width: 192px; height: 230px; background: #414244; border: 1px solid #525356; border-radius: 8px; display: flex; flex-direction: column; align-items: center; justify-content: center; font-size: 16px; line-height: 24px; }
.card svg { margin-bottom: 12px; }
.card:last-child svg { margin-top: 4px; margin-bottom: 15px; }

/* Chrome window */
.chr { background: linear-gradient(#ffab41 60px, #242424 60px); font-size: 13px; color: #222; }
.strip { height: 40px; display: flex; align-items: flex-end; padding-left: 6px; }
.drop { width: 28px; height: 28px; margin: 0 10px 6px 0; background: #ffdeb7; border-radius: 10px; display: grid; place-items: center; }
.ctab { width: 238px; height: 34px; padding: 0 19px 5px 4px; display: flex; align-items: center; gap: 8px; color: #5d4422; position: relative; }
.ctab > svg:first-child { color: #222; }
.ctab > svg:last-child { margin-left: auto; }
.ctab.line { padding-left: 5px; }
.ctab.line::before { content: ""; position: absolute; left: -8px; top: 6px; width: 2px; height: 16px; background: #ffdeb7; }
.ctab.cur { width: 232px; margin-left: -4px; padding-left: 9px; padding-right: 9px; background: #ffdeb7; border-radius: 10px 10px 0 0; color: #222; }
.ctab.cur::before, .ctab.cur::after { content: ""; position: absolute; bottom: 0; width: 10px; height: 10px; }
.ctab.cur::before { left: -10px; background: radial-gradient(circle at 0 0, transparent 9.500px, #ffdeb7 10px); }
.ctab.cur::after { right: -10px; background: radial-gradient(circle at 100% 0, transparent 9.500px, #ffdeb7 10px); }
.cplus { margin: 0 0 14px 14px; }
.cwin { margin: 0 9px 12px auto; }
.cbar { height: 81px; background: #ffdeb7; border-bottom: 1px solid #c3ab8f; border-radius: 8px 8px 0 0; }
.crow { height: 40px; padding-top: 6px; display: flex; align-items: center; }
.cnav { margin: 0 2px 0 8px; width: 140px; }
.omni { margin-left: 6px; width: 1518px; height: 34px; border-radius: 17px; background: #dfc4a1; display: flex; align-items: center; padding-left: 5px; color: #6b6154; font-size: 14.500px; }
.omni b { color: #222; }
.info { width: 24px; height: 24px; border-radius: 50%; background: #ffdeb7; display: grid; place-items: center; margin-right: 8px; }
.omni .star { margin-right: 15px; }
.ext { margin-left: 9px; width: 106px; height: 34px; border: 1px solid #e3c8a5; border-radius: 17px; display: flex; align-items: center; justify-content: space-between; padding: 0 8px; }
.gp { width: 16px; height: 16px; background: #444; color: #fff; padding: 1px; }
.vl { width: 2px; height: 16px; background: #ffab41; }
.vl.a { margin: 0 18px 0 9px; }
.dl { margin-right: 17px; }
.me { margin-right: 23px; }
.cmarks { height: 40px; display: flex; align-items: center; gap: 16px; padding-left: 18px; }
.cmarks a { gap: 6px; }
.cmarks b { padding-bottom: 1px; }
.apps { margin-right: -2px; }
.cmarks .vl { margin-right: -2px; }
.cmarks .cut { padding-right: 2.500px; }
.cmarks .cut.w { padding-right: 6px; }
.cmore { margin-left: auto; }
.cmarks .vl.b { margin: 0 -1px 0 2px; }
.fol { margin-right: -8px; }
.cmarks > b { margin-right: 14px; }

.page { flex: 1; background: #242424; color: #dedede; font-size: 15.500px; line-height: 24px; padding-top: 240px; position: relative; display: flex; flex-direction: column; align-items: flex-start; }
.ln { height: 24px; display: flex; }
.em { width: 24px; font-size: 16px; letter-spacing: 0; white-space: nowrap; flex: none; display: inline-block; }
pre { font: 13px/20px "DejaVu Sans Mono", monospace; height: 20px; margin: 13px 0; display: flex; }
pre .em { font-size: 13px; }
pre.reply { margin: 12px 0; }
.btns { display: flex; }
.btns button { height: 41px; border: 0; border-radius: 8px; background: #1a1a1a; color: #fff; font: 600 15.500px/24px "Noto Sans", sans-serif; padding: 0 20px 1px; display: flex; align-items: center; }
.ask { margin-top: 3px; width: 185px; height: 21px; border: 1px solid #858585; border-radius: 1px; background: #3b3b3b; color: #757575; font: 13.100px/19px "Liberation Sans", sans-serif; padding-left: 3px; white-space: nowrap; }
.page h3 { height: 36px; margin-top: 19px; line-height: 34px; font-size: 23.500px; font-weight: 700; display: flex; }
.page h3 .em { width: 37px; font-size: 24px; }
.page h3 + pre { margin: 20px 0 0; }
.page h3 + .ln { margin-top: 20px; }
.blue { position: absolute; right: 0; top: 64px; width: 7px; height: 50px; background: #1485ff; border-radius: 5px 0 0 5px; }
.cursor { position: absolute; left: 853px; top: 262px; }
.lens { position: absolute; right: 0; top: 804px; width: 50px; height: 45px; border-radius: 22px 0 0 22px; background: #151515; padding: 5px 9px; box-shadow: 0 0 8px #1c1c1c; }

/* bottom panel */
.panel { height: 41px; background: #2f2f2f; border-top: 1px solid #1d1d1d; display: flex; align-items: stretch; }
.app { width: 38px; margin-right: 2px; display: flex; align-items: center; justify-content: center; border-bottom: 2px solid transparent; }
.app.lit { background: #515151; }
.app.run { border-bottom-color: #8c5dd9; }
.psep { width: 1px; background: #454545; margin-left: 8px; }
.dock { display: flex; margin-left: 1803px; align-items: stretch; }
.any, .mint { display: flex; align-items: center; }
.any { margin-right: 9px; }
.mint { margin-right: 9px; }
.term { width: 28px; height: 28px; border-radius: 5px; background: #282828; border: 1px solid #080808; color: #ddd; font: bold 9px/13px "DejaVu Sans Mono", monospace; padding-left: 3px; }
.tray { margin: 8px 0 0 auto; }
.clock { color: #e0e0e0; font-weight: 700; font-size: 13px; line-height: 40px; margin-left: 6px; }
.show { width: 8px; height: 32px; background: #474747; margin: 4px 4px 0 9px; }
```
FILE: app.js
```js
document.querySelectorAll('[data-w]').forEach(function (el) {
  var w = Number(el.dataset.w);
  var n = Array.from(el.textContent).length;
  var natural = el.getBoundingClientRect().width;
  el.style.letterSpacing = ((w - natural) / n) + 'px';
  el.style.width = w + 'px';
});
```
